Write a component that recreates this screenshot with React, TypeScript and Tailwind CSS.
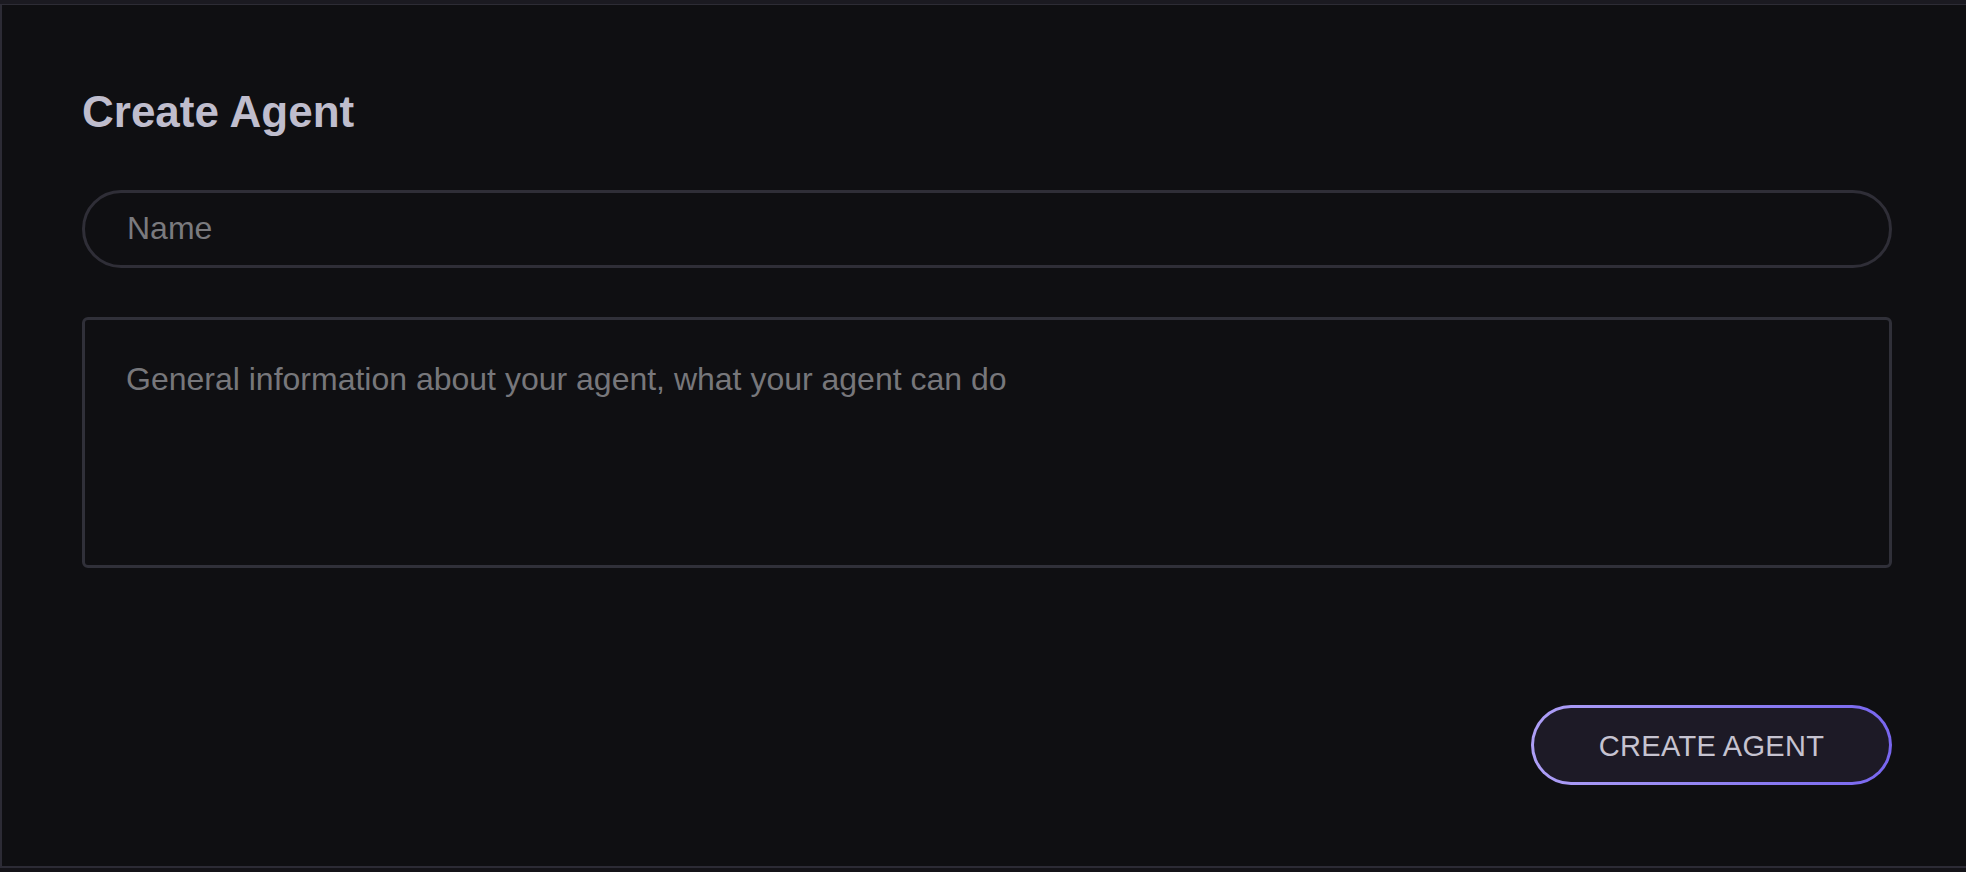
import React from "react";

export default function App() {
  return (
    <div
      className="w-full h-[872px] bg-[#0f0f12] flex flex-col overflow-hidden"
      style={{ fontFamily: '"Liberation Sans", Arial, sans-serif' }}
    >
      <div className="h-[5px] shrink-0 bg-[#1b1a21] border-b border-[#2d2c35]" />
      <div className="flex-1 flex flex-col border-l-2 border-b-2 border-[#2c2b35] pl-[80px] pr-[74px]">
        <h1 className="mt-[81px] text-[44px] leading-[1.2] font-bold text-[#bfbdcd]">
          Create Agent
        </h1>
        <input
          type="text"
          placeholder="Name"
          className="mt-[51px] h-[78px] w-full rounded-full border-[3px] border-[#2f2e37] bg-transparent px-[42px] text-[32px] text-[#c8c6d2] placeholder:text-[#7a7a7e] outline-none"
        />
        <textarea
          placeholder="General information about your agent, what your agent can do"
          className="mt-[49px] h-[251px] w-full resize-none rounded-[6px] border-[3px] border-[#303039] bg-transparent px-[41px] pt-[35px] text-[32px] leading-[1.5] text-[#c8c6d2] placeholder:text-[#77777b] outline-none"
        />
        <div className="mt-[137px] flex justify-end">
          <div className="rounded-full p-[3px] bg-gradient-to-r from-[#ae9ff6] to-[#7866ef]">
            <button className="h-[74px] w-[355px] rounded-full bg-[#1d1a26] pt-[3px] text-[29px] text-[#c6c3d0] tracking-[0.3px]">
              CREATE AGENT
            </button>
          </div>
        </div>
      </div>
      <div className="h-[4px] shrink-0 bg-[#141318]" />
    </div>
  );
}
